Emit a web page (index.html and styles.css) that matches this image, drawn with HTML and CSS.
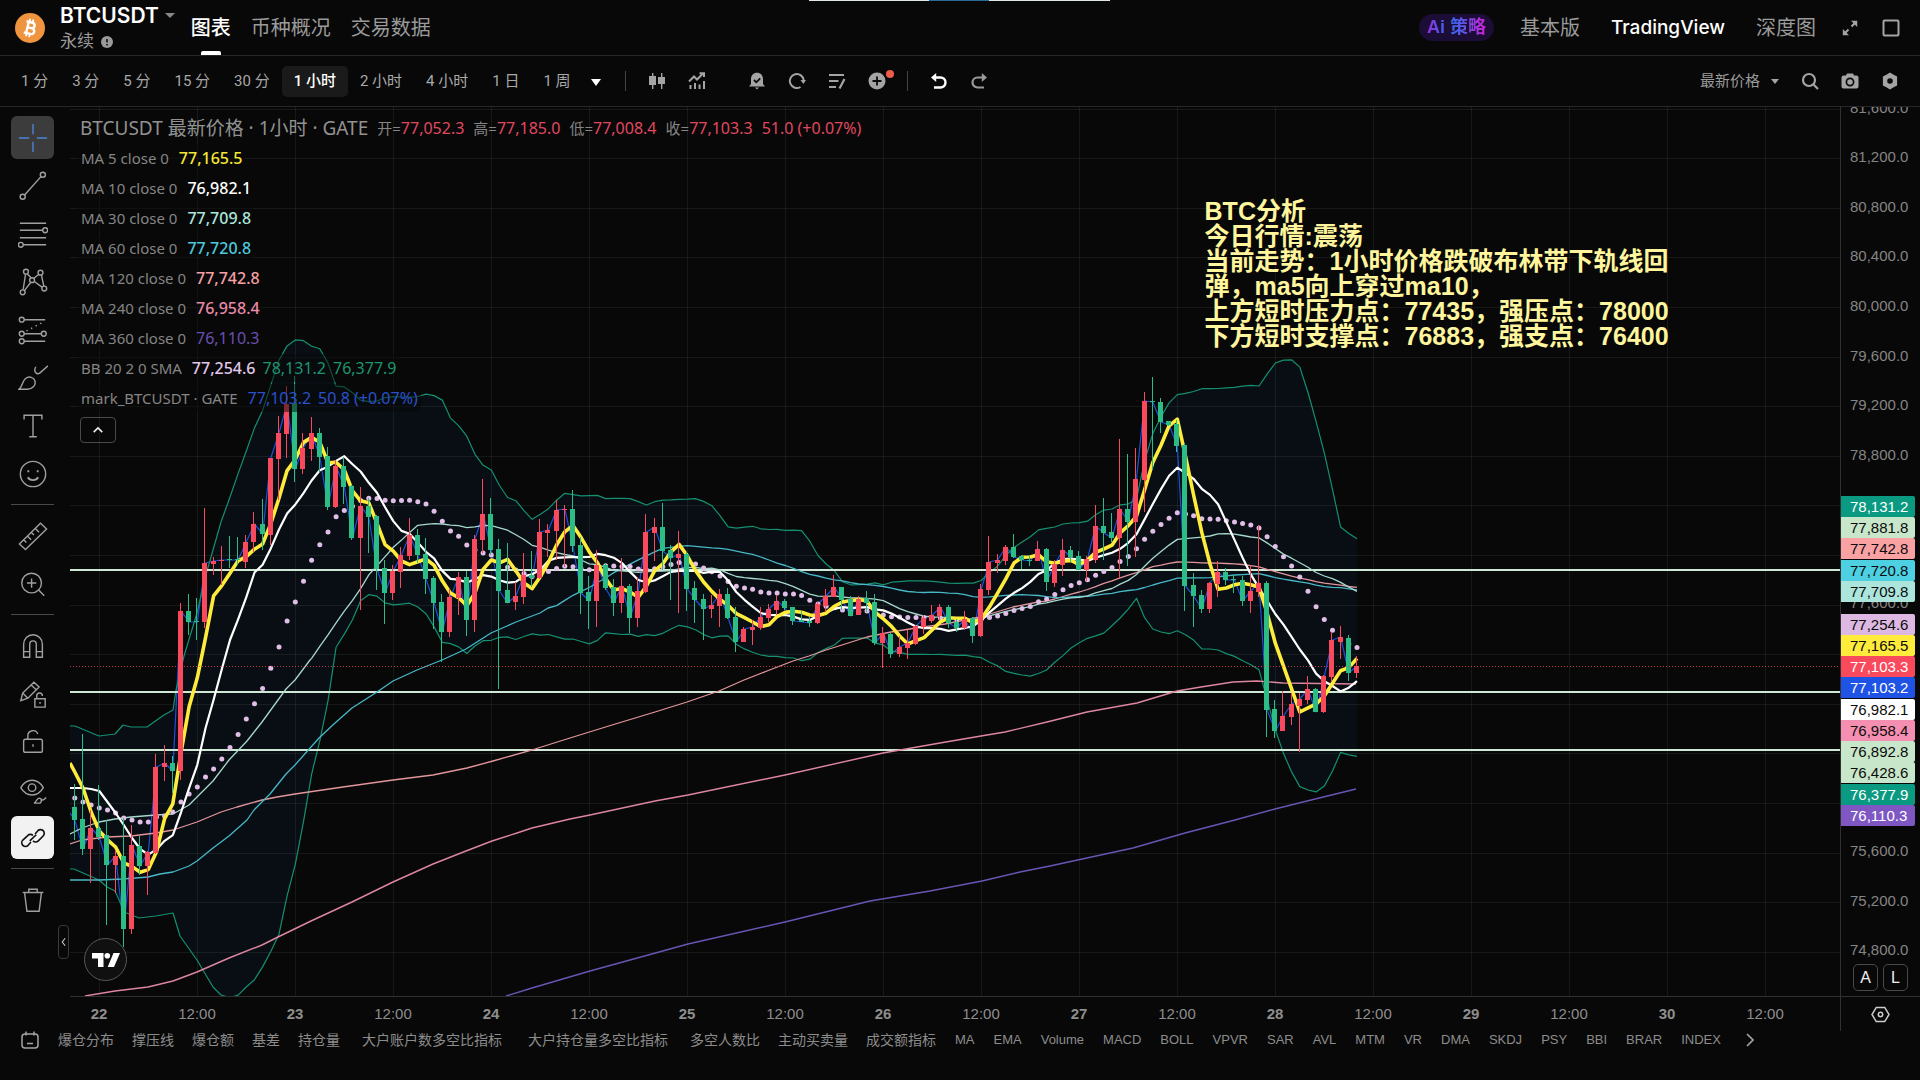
FILE: index.html
```html
<!DOCTYPE html>
<html lang="zh-CN">
<head>
<meta charset="utf-8">
<meta name="viewport" content="width=device-width, initial-scale=1">
<title>BTCUSDT 永续 图表</title>
<link rel="stylesheet" href="styles.css">
</head>
<body>
<div class="top-strip" aria-hidden="true"></div>

<header class="header">
  <svg class="coin" viewBox="0 0 30 30" aria-hidden="true"><circle cx="15" cy="15" r="15" fill="#f0953f"/><g transform="rotate(14 15 15)" fill="none" stroke="#fff" stroke-width="2.4"><path d="M10 9.3h6.2a2.7 2.7 0 0 1 0 5.5h-3.8M12.4 14.8h4.6a2.9 2.9 0 0 1 0 5.9H10M12.4 9.3v11.4"/><path d="M13 6v3M16.3 6v3M13 21v3M16.3 21v3" stroke-width="1.8"/></g></svg>
  <div class="pair">
    <button class="pair-name" type="button">BTCUSDT<span class="caret caret-dim"></span></button>
    <div class="pair-kind">永续<svg viewBox="0 0 12 12" aria-hidden="true"><circle cx="6" cy="6" r="6" fill="#9a9a9a"/><path d="M6 3v3.6M6 8v1.4" stroke="#111" stroke-width="1.6"/></svg></div>
  </div>
  <nav class="tabs">
    <a class="tab tab-on" href="#chart">图表</a>
    <a class="tab" href="#about">币种概况</a>
    <a class="tab" href="#data">交易数据</a>
  </nav>
  <nav class="views">
    <a class="ai-pill" href="#ai"><span class="ai-text">Ai 策略</span></a>
    <a class="view" href="#basic">基本版</a>
    <a class="view view-on" href="#tv">TradingView</a>
    <a class="view" href="#depth">深度图</a>
  </nav>
  <button class="head-btn" type="button" aria-label="展开"><svg viewBox="0 0 18 18" fill="none" stroke="#a4a4a4" stroke-width="2"><path d="M10.500 7.500L15 3M7.500 10.500L3 15"/><path d="M10 1.800h6.200V8zM1.800 10v6.200H8z" fill="#a4a4a4" stroke="none"/></svg></button>
  <button class="head-btn" type="button" aria-label="窗口"><svg viewBox="0 0 18 18"><rect x="1.500" y="1.500" width="15" height="15" rx="1" fill="none" stroke="#a4a4a4" stroke-width="2"/></svg></button>
</header>

<div class="toolbar">
  <div class="periods">
    <button type="button">1 分</button><button type="button">3 分</button><button type="button">5 分</button><button type="button">15 分</button><button type="button">30 分</button><button class="on" type="button">1 小时</button><button type="button">2 小时</button><button type="button">4 小时</button><button type="button">1 日</button><button type="button">1 周</button>
  </div>
  <button class="more" type="button" aria-label="更多周期"><span class="caret caret-big"></span></button>
  <span class="bar"></span>
  <div class="tools tools-a">
    <button type="button" aria-label="蜡烛图"><svg viewBox="0 0 18 18" fill="#a4a4a4"><path d="M1 4h7v9H1zM10 5h7v7h-7z"/><path d="M4 1h1.400v16H4zM13 1h1.400v16H13z"/></svg></button>
    <button type="button" aria-label="指标"><svg viewBox="0 0 18 18" fill="none" stroke="#a4a4a4" stroke-width="2"><path d="M1 9.500L6 4.500l3 3 6.500-6.500M11.500 1.200H16V5M2.500 13v4M7 11v6M11.500 12.500V17M16 9v8"/></svg></button>
  </div>
  <div class="tools tools-b">
    <button type="button" aria-label="提醒"><svg viewBox="0 0 18 18"><path d="M9 .8c3.600 0 6 2.600 6 6.200v5l2 2.500H1L3 12V7C3 3.400 5.400.8 9 .8zM7 15.500h4L9 17.500z" fill="#a4a4a4"/><path d="M6 8l2.300 2.300L12.200 6.300" fill="none" stroke="#0a0a0a" stroke-width="1.800"/></svg></button>
    <button type="button" aria-label="回放"><svg viewBox="0 0 18 18"><path d="M12.500 15A7 7 0 1 1 15.800 8.500" fill="none" stroke="#a4a4a4" stroke-width="2"/><path d="M12.500 8h5.500l-2.600 4z" fill="#a4a4a4"/></svg></button>
    <button type="button" aria-label="对象列表"><svg viewBox="0 0 18 18" fill="none" stroke="#a4a4a4" stroke-width="2.200"><path d="M1 3h15M1 9h9.500M1 15h7M16.500 7l-5 9.500"/></svg></button>
    <button class="dotted" type="button" aria-label="添加"><svg viewBox="0 0 18 18"><circle cx="9" cy="9" r="8.500" fill="#a4a4a4"/><path d="M9 4.500v9M4.500 9h9" stroke="#0a0a0a" stroke-width="1.800"/></svg></button>
  </div>
  <span class="bar"></span>
  <div class="tools tools-c">
    <button type="button" aria-label="撤销"><svg viewBox="0 0 18 18" fill="none" stroke="#fff" stroke-width="2.400"><path d="M3 5.500h7.500a5 5 0 0 1 0 10H4"/><path d="M6.200 1v9L1 5.500z" fill="#fff" stroke="none"/></svg></button>
    <button type="button" aria-label="重做"><svg viewBox="0 0 18 18" fill="none" stroke="#9a9a9a" stroke-width="2.200"><path d="M15 5.500H7.500a5 5 0 0 0 0 10H14"/><path d="M11.800 1v9L17 5.500z" fill="#9a9a9a" stroke="none"/></svg></button>
  </div>
  <button class="price-kind" type="button">最新价格<span class="caret"></span></button>
  <div class="tools tools-d">
    <button type="button" aria-label="搜索"><svg viewBox="0 0 18 18" fill="none" stroke="#a4a4a4" stroke-width="2.200"><circle cx="8" cy="8" r="6"/><path d="M12.500 12.500L17 17"/></svg></button>
    <button type="button" aria-label="截图"><svg viewBox="0 0 18 18"><path d="M2.500 3.500H5l1-2h6l1 2h2.500A2 2 0 0 1 17.500 5.500v9a2 2 0 0 1-2 2h-13a2 2 0 0 1-2-2v-9a2 2 0 0 1 2-2z" fill="#a4a4a4"/><circle cx="9" cy="10" r="3.600" fill="none" stroke="#0a0a0a" stroke-width="1.700"/></svg></button>
    <button type="button" aria-label="设置"><svg viewBox="0 0 18 18"><path d="M9 .5l3.200 1.900 3.900 2v9.200l-3.900 2L9 17.500l-3.200-1.900-3.900-2V4.400l3.900-2z" fill="#a4a4a4"/><circle cx="9" cy="9" r="2.800" fill="#0a0a0a"/></svg></button>
  </div>
</div>

<main class="workspace">
  <aside class="draw">
    <button class="on" type="button" aria-label="十字光标"><svg viewBox="0 0 32 32"><path d="M16 1v11M16 20v11M1 16h11M20 16h11"/></svg></button>
    <button type="button" aria-label="趋势线"><svg viewBox="0 0 32 32"><path d="M7 25.500L24.500 6"/><circle cx="5" cy="27.500" r="2.700"/><circle cx="26.500" cy="4" r="2.700"/></svg></button>
    <button type="button" aria-label="斐波那契"><svg viewBox="0 0 32 32"><path d="M2 4.500h28M2 12h24.500M2 20h28M5.500 27.500H30"/><circle cx="29" cy="12" r="2.600"/><circle cx="3" cy="27.500" r="2.600"/></svg></button>
    <button type="button" aria-label="形态"><svg viewBox="0 0 32 32"><circle cx="8.500" cy="5" r="2.600"/><circle cx="24" cy="6" r="2.600"/><circle cx="15" cy="14" r="2.600"/><circle cx="5" cy="27" r="2.600"/><circle cx="28" cy="23" r="2.600"/><path d="M8 8L5.500 24M10 7.500l4 4M17 12l5-4M25 8.500l2.500 12M13.500 16.500L7 25M17.500 15.500l8 6"/></svg></button>
    <button type="button" aria-label="预测"><svg viewBox="0 0 32 32"><path d="M6.500 5H29M6.500 20H25M6.500 28H29"/><path d="M9 17L28 7" stroke-dasharray="1.500 4"/><circle cx="4" cy="5" r="2.600"/><circle cx="4" cy="20" r="2.600"/><circle cx="4" cy="28" r="2.600"/><circle cx="27.500" cy="20" r="2.600"/></svg></button>
    <button type="button" aria-label="画笔"><svg viewBox="0 0 32 32"><path d="M1 28c4-3 3-8 7-11.500 4-3 9-1 10 2.500 1.500 5-3 9-8 9zM19 4c-3 5 1 9 4.500 6.500L32 3"/></svg></button>
    <button type="button" aria-label="文字"><svg viewBox="0 0 32 32"><path d="M6.500 9V4.500h19V9M16 4.500v23M12 27.500h8"/></svg></button>
    <button type="button" aria-label="表情"><svg viewBox="0 0 32 32"><circle cx="16" cy="16" r="13.500"/><path d="M10.500 19.500c2 4 9 4 11 0M11 12v2M21 12v2" stroke-width="2"/></svg></button>
    <hr>
    <button type="button" aria-label="测量"><svg viewBox="0 0 32 32"><path d="M1.500 24.500L24 2.500l6.500 6L8 30.500zM6 20l3 3M10 16l4 4M14 12l3 3M18.500 8l4 4"/></svg></button>
    <button type="button" aria-label="放大"><svg viewBox="0 0 32 32"><circle cx="14.500" cy="15" r="10.500"/><path d="M22 22.500l6 6M9.500 15h10M14.500 10v10"/></svg></button>
    <hr>
    <button type="button" aria-label="磁铁"><svg viewBox="0 0 32 32"><path d="M6 28V14a10 10 0 0 1 20 0v14h-6.500V14a3.500 3.500 0 0 0-7 0v14zM6 22h6.500M19.500 22H26"/></svg></button>
    <button type="button" aria-label="保持绘图"><svg viewBox="0 0 32 32"><path d="M3 23l2-8L17 3.500l5.500 5L10.500 20.500zM14 6.500l5.500 5M5 15l5.500 5.500M18 21h11v9H18zM20 21v-3a3 3 0 0 1 6 0M23.500 24.500v2"/></svg></button>
    <button type="button" aria-label="锁定"><svg viewBox="0 0 32 32"><rect x="6" y="13" width="20" height="14" rx="2"/><path d="M10.500 13V9.500c0-6.500 9-7.500 10.500-2M16 18.500v2.500"/></svg></button>
    <button type="button" aria-label="隐藏"><svg viewBox="0 0 32 32"><path d="M3 13.500C9 3 21 3 27 13.500 21 24 9 24 3 13.500zM17 30c3-1 2-4 5-5s4 3 1.500 5zM25 25c0 2.500 2 2.500 5-1"/><circle cx="15" cy="13.500" r="4"/></svg></button>
    <button class="link" type="button" aria-label="同步"><svg viewBox="0 0 32 32"><path d="M13.500 21l-3.500 4a4.500 4.500 0 0 1-6.500-6.500L9.500 13a4.500 4.500 0 0 1 6.500 0M18.500 11L22 7a4.500 4.500 0 0 1 6.500 6.500L22.500 19.500a4.500 4.500 0 0 1-6.500 0M12 19.500l8-7.500"/></svg></button>
    <hr>
    <button type="button" aria-label="删除"><svg viewBox="0 0 32 32"><path d="M5 8h22M11.500 8V4.500h9V8M7 8l2.500 20h13L25 8"/></svg></button>
  </aside>

  <section class="pane" id="chart">
    <svg class="plot" id="plot" viewBox="70 107 1770 889" preserveAspectRatio="none" role="img" aria-label="BTCUSDT 1小时 K线图"></svg>
    <div class="legend">
      <div class="legend-title"><span class="symbol">BTCUSDT 最新价格 · 1小时 · GATE</span><span>开=<b>77,052.3</b></span><span>高=<b>77,185.0</b></span><span>低=<b>77,008.4</b></span><span>收=<b>77,103.3</b></span><b>51.0 (+0.07%)</b></div>
      <div class="row">MA 5 close 0<b class="c-yellow">77,165.5</b></div>
      <div class="row">MA 10 close 0<b class="c-white">76,982.1</b></div>
      <div class="row">MA 30 close 0<b class="c-mint">77,709.8</b></div>
      <div class="row">MA 60 close 0<b class="c-cyan">77,720.8</b></div>
      <div class="row">MA 120 close 0<b class="c-salmon">77,742.8</b></div>
      <div class="row">MA 240 close 0<b class="c-pink">76,958.4</b></div>
      <div class="row">MA 360 close 0<b class="c-purple">76,110.3</b></div>
      <div class="row">BB 20 2 0 SMA<b class="c-lilac">77,254.6</b><b class="c-green">78,131.2</b><b class="c-green">76,377.9</b></div>
      <div class="row">mark_BTCUSDT · GATE<b class="c-blue">77,103.2</b><b class="c-blue">50.8 (+0.07%)</b></div>
      <button class="fold" type="button" aria-label="收起"><svg viewBox="0 0 14 8"><path d="M2 6.500l5-5 5 5" fill="none" stroke="#eee" stroke-width="1.800"/></svg></button>
    </div>
    <p class="note">BTC分析<br>今日行情:震荡<br>当前走势：1小时价格跌破布林带下轨线回<br>弹，ma5向上穿过ma10，<br>上方短时压力点：77435，强压点：78000<br>下方短时支撑点：76883，强支点：76400</p>
    <a class="tv" href="#tv" aria-label="TradingView"><svg viewBox="0 0 28 14" fill="#fff"><path d="M0 0h11.500v14H6V5.500H0zM21.500 0H28l-6 14h-6.300z"/><circle cx="15.300" cy="2.800" r="2.800"/></svg></a>
    <button class="handle" type="button" aria-label="收起工具栏"><svg viewBox="0 0 6 12"><path d="M5 1.500L1.500 6 5 10.500" fill="none" stroke="#ccc" stroke-width="1.300"/></svg></button>
  </section>

  <div class="prices">
    <ul class="scale">
      <li>81,600.0</li><li>81,200.0</li><li>80,800.0</li><li>80,400.0</li><li>80,000.0</li><li>79,600.0</li><li>79,200.0</li><li>78,800.0</li><li></li><li></li><li>77,600.0</li><li></li><li></li><li></li><li></li><li>75,600.0</li><li>75,200.0</li><li>74,800.0</li>
    </ul>
    <ul class="tags">
      <li class="t-green">78,131.2</li><li class="t-line">77,881.8</li><li class="t-salmon">77,742.8</li><li class="t-cyan seam">77,720.8</li><li class="t-mint">77,709.8</li>
      <li class="t-lilac tag-gap">77,254.6</li><li class="t-yellow">77,165.5</li><li class="t-red">77,103.3</li><li class="t-blue">77,103.2</li><li class="t-white seam">76,982.1</li><li class="t-pink">76,958.4</li><li class="t-line">76,892.8</li><li class="t-line">76,428.6</li><li class="t-green seam">76,377.9</li><li class="t-purple">76,110.3</li>
    </ul>
    <div class="modes"><button type="button">A</button><button type="button">L</button></div>
  </div>

  <div class="times">
    <ol>
      <li class="day">22</li><li>12:00</li><li class="day">23</li><li>12:00</li><li class="day">24</li><li>12:00</li><li class="day">25</li><li>12:00</li><li class="day">26</li><li>12:00</li><li class="day">27</li><li>12:00</li><li class="day">28</li><li>12:00</li><li class="day">29</li><li>12:00</li><li class="day">30</li><li>12:00</li>
    </ol>
  </div>
  <button class="corner" type="button" aria-label="坐标设置"><svg viewBox="0 0 20 18" fill="none" stroke="#ccc" stroke-width="1.600"><path d="M5.500 1.500h9L19 9l-4.500 7.500h-9L1 9z"/><circle cx="10" cy="9" r="2.300"/></svg></button>
</main>

<footer class="indicators">
  <button class="cal" type="button" aria-label="指标列表"><svg viewBox="0 0 18 18" fill="none" stroke="#a4a4a4" stroke-width="1.500"><rect x="1" y="3" width="16" height="14" rx="3"/><path d="M5 .5v4M13 .5v4M6 12.500h6"/></svg></button>
  <div class="group">
    <button type="button">爆仓分布</button><button type="button">撑压线</button><button type="button">爆仓额</button><button type="button">基差</button><button type="button">持仓量</button><button class="wide" type="button">大户账户数多空比指标</button><button class="wide" type="button">大户持仓量多空比指标</button><button type="button">多空人数比</button><button type="button">主动买卖量</button><button type="button">成交额指标</button>
  </div>
  <div class="group group-latin">
    <button type="button">MA</button><button type="button">EMA</button><button type="button">Volume</button><button type="button">MACD</button><button type="button">BOLL</button><button type="button">VPVR</button><button type="button">SAR</button><button type="button">AVL</button><button type="button">MTM</button><button type="button">VR</button><button type="button">DMA</button><button type="button">SKDJ</button><button type="button">PSY</button><button type="button">BBI</button><button type="button">BRAR</button><button type="button">INDEX</button>
  </div>
  <button class="next" type="button" aria-label="更多"><svg viewBox="0 0 8 14"><path d="M1 1l6 6-6 6" fill="none" stroke="#a4a4a4" stroke-width="1.600"/></svg></button>
</footer>
<script src="chart.js"></script>
</body>
</html>
```
FILE: styles.css
```css
* { box-sizing: border-box; margin: 0; padding: 0; }

body {
  display: flex;
  flex-direction: column;
  min-height: 100vh;
  background: #080808;
  color: #9a9a9a;
  font-family: "Liberation Sans", "Noto Sans CJK SC", sans-serif;
  font-size: 15px;
  line-height: 20px;
  overflow-x: hidden;
}

button { background: none; border: 0; color: inherit; font: inherit; white-space: nowrap; cursor: pointer; }
a { color: inherit; text-decoration: none; white-space: nowrap; }
ul, ol { list-style: none; }
svg { display: block; }

.top-strip {
  position: absolute;
  top: 0;
  left: 809px;
  width: 301px;
  height: 1px;
  background: linear-gradient(90deg, #dfe8e4 120px, #2a6a96 120px, #2a6a96 180px, #dfe8e4 180px);
}

.caret {
  display: inline-block;
  border: 4px solid transparent;
  border-top: 5px solid #a4a4a4;
  border-bottom: 0;
}
.caret-dim { border-width: 5px 5px 0; border-top-color: #888; }
.caret-big { border-width: 7px 5px 0; border-top-color: #fff; }

/* Header */
.header {
  display: flex;
  align-items: center;
  height: 56px;
  padding: 0 20px 0 15px;
  border-bottom: 1px solid #262626;
}
.coin { width: 30px; height: 30px; margin-right: 15px; }
.pair { margin-right: 16px; }
.pair-name {
  display: flex;
  align-items: center;
  gap: 6px;
  color: #fff;
  font-family: Inter, "Liberation Sans", sans-serif;
  font-size: 21px;
  font-weight: 600;
  line-height: 28px;
}
.pair-kind { display: flex; align-items: center; gap: 7px; font-size: 17px; line-height: 24px; }
.pair-kind svg { width: 12px; height: 12px; }
.tabs { display: flex; gap: 20px; height: 55px; }
.tab { position: relative; font-size: 20px; line-height: 57px; }
.tab-on { color: #fff; font-weight: 500; }
.tab-on::after {
  content: "";
  position: absolute;
  left: 50%;
  bottom: 0;
  width: 20px;
  height: 4px;
  margin-left: -10px;
  border-radius: 2px 2px 0 0;
  background: #fff;
}
.views { display: flex; align-items: center; gap: 31px; margin-left: auto; margin-right: 25px; font-size: 20px; }
.view-on { color: #fff; font-family: Inter, sans-serif; font-size: 19px; font-weight: 500; }
.ai-pill {
  height: 27px;
  margin-right: -5px;
  padding: 0 8px;
  border-radius: 14px;
  background: #1b0d35;
  font-size: 18px;
  line-height: 27px;
}
.ai-text {
  background: linear-gradient(90deg, #9a2be0, #2f6af0 35%, #5a58ea 60%, #d41fd6);
  -webkit-background-clip: text;
  background-clip: text;
  color: transparent;
  font-weight: 700;
}
.head-btn + .head-btn { margin-left: 23px; }
.head-btn svg { width: 18px; height: 18px; }

/* Period and tool bar */
.toolbar {
  display: flex;
  align-items: center;
  height: 51px;
  padding: 0 21px 0 9px;
  border-bottom: 1px solid #262626;
}
.periods { display: flex; font-family: Roboto, "Noto Sans CJK SC", sans-serif; color: #a8a8a8; }
.periods button { height: 31px; padding: 0 12px; border-radius: 5px; }
.periods .on { background: #1a1a1a; color: #fff; font-weight: 500; }
.more { margin: 0 24px 0 8px; line-height: 10px; }
.bar { width: 1px; height: 20px; background: #444; }
.tools { display: flex; align-items: center; }
.tools svg { width: 18px; height: 18px; }
.tools-a { gap: 22px; margin: 0 42px 0 22px; }
.tools-b { gap: 22px; margin-right: 21px; }
.tools-c { gap: 22px; margin-left: 22px; }
.tools-d { gap: 22px; margin-left: 22px; }
.dotted { position: relative; }
.dotted::after {
  content: "";
  position: absolute;
  top: -2px;
  right: -8px;
  width: 8px;
  height: 8px;
  border-radius: 50%;
  background: #ee5b4a;
}
.price-kind { display: flex; align-items: center; gap: 11px; margin-left: auto; }

/* Workspace */
.workspace {
  display: grid;
  grid-template-columns: 70px minmax(0, 1fr) 80px;
  grid-template-rows: minmax(0, 1fr) 34px;
  flex: 1;
  min-height: 860px;
}

.draw {
  grid-row: 1 / 3;
  display: flex;
  flex-direction: column;
  gap: 5px;
  width: 65px;
  padding: 9px 11px 0;
}
.draw button { display: grid; place-items: center; height: 43px; border-radius: 6px; }
.draw button.on { background: #3c3c3c; }
.draw button.link { background: #f2f2f2; }
.draw svg { width: 30px; height: 30px; fill: none; stroke: #a0a0a0; stroke-width: 1.5; }
.draw .on svg { stroke: #4a84d6; }
.draw .link svg { width: 26px; height: 26px; stroke: #111; stroke-width: 2; }
.draw hr { height: 1px; margin: 4px 0; border: 0; background: #4a4a4a; }

.pane { position: relative; border-bottom: 1px solid #303030; }
.plot { position: absolute; inset: 0; width: 100%; height: 100%; overflow: hidden; }

.legend {
  position: relative;
  display: flex;
  flex-direction: column;
  align-items: flex-start;
  padding: 6px 0 0 8px;
  color: #858585;
  font-family: "Noto Sans", "Noto Sans CJK SC", sans-serif;
}
.legend b { font-weight: 400; font-size: 16px; }
.legend-title { display: flex; align-items: center; gap: 9px; height: 30px; padding: 0 2px; }
.legend-title b { color: #e04860; }
.symbol { color: #929292; font-size: 19px; }
.row { display: flex; align-items: center; gap: 7px; height: 28px; margin: 1px 0; padding: 0 3px; background: rgba(8, 8, 8, .5); }
.row b:first-child { margin-left: 3px; }
.row .c-yellow { color: #f5e636; font-weight: 500; }
.row .c-white { color: #fff; font-weight: 500; }
.row .c-mint { color: #ace5dc; font-weight: 500; }
.row .c-cyan { color: #4dc8dc; font-weight: 500; }
.row .c-salmon { color: #f4a0a4; font-weight: 500; }
.row .c-pink { color: #e88aa8; font-weight: 500; }
.row .c-lilac { color: #e1c8e8; font-weight: 500; }
.c-purple { color: #6a4fb0; }
.c-green { color: #1d9470; }
.c-blue { color: #2a50cc; }
.fold { display: grid; place-items: center; width: 36px; height: 26px; margin-top: 4px; margin-left: 2px; border: 1px solid #4a4a4a; border-radius: 4px; }
.fold svg { width: 12px; height: 8px; }

.note {
  position: absolute;
  top: 92px;
  left: 64.1%;
  color: #fff59d;
  font-size: 25px;
  font-weight: 700;
  line-height: 25px;
  white-space: nowrap;
}
.tv {
  position: absolute;
  left: 14px;
  bottom: 15px;
  display: grid;
  place-items: center;
  width: 43px;
  height: 43px;
  border: 1px solid #585858;
  border-radius: 50%;
  background: #101010;
}
.tv svg { width: 28px; height: 14px; }
.handle {
  position: absolute;
  left: -12px;
  bottom: 37px;
  display: grid;
  place-items: center;
  width: 11px;
  height: 34px;
  border: 1px solid #3a3a3a;
  border-radius: 4px;
}
.handle svg { width: 5px; height: 10px; }

/* Price axis */
.prices { position: relative; overflow: hidden; border-left: 1px solid #303030; border-bottom: 1px solid #303030; color: #858585; }
.scale { display: grid; grid-auto-rows: minmax(0, 1fr); height: calc(100% + 3px); margin-top: -24px; padding-left: 9px; }
.scale li { display: flex; align-items: center; }
.tags { position: absolute; top: 389px; left: 0; width: 74px; }
.tags li { height: 21px; padding-left: 9px; border-radius: 0 2px 2px 0; color: #0c0c0c; line-height: 21px; }
.tags .seam { margin-top: 1px; }
.tags .tag-gap { margin-top: 12px; }
.tags .t-green { background: #0a9981; color: #fff; }
.tags .t-line { background: #c8e6c9; }
.tags .t-salmon { background: #faa1a4; }
.tags .t-cyan { background: #4dd0e1; }
.tags .t-mint { background: #ace5dc; }
.tags .t-lilac { background: #dcb8e2; }
.tags .t-yellow { background: #ffeb3b; }
.tags .t-red { background: #f9495d; color: #fff; }
.tags .t-blue { background: #1e53e5; color: #fff; }
.tags .t-white { background: #fff; }
.tags .t-pink { background: #f48fb1; }
.tags .t-purple { background: #7e57c2; color: #fff; }
.modes { position: absolute; right: 12px; bottom: 5px; display: flex; gap: 5px; }
.modes button { width: 25px; height: 27px; border: 1px solid #4a4a4a; border-radius: 5px; background: #080808; color: #f0f0f0; font-size: 16px; }

/* Time axis */
.times { overflow: hidden; color: #8e8e8e; }
.times ol { display: grid; grid-template-columns: repeat(18, minmax(0, 1fr)); margin: 0 26px 0 -20px; text-align: center; line-height: 34px; }
.day { font-weight: 700; }
.corner { display: grid; place-items: center; border-left: 1px solid #303030; }
.corner svg { width: 19px; height: 17px; }

/* Indicator bar */
.indicators {
  display: flex;
  align-items: center;
  gap: 19px;
  height: 49px;
  padding: 0 21px 31px;
  color: #8c8c8c;
  line-height: 18px;
  overflow: hidden;
}
.group { display: flex; gap: 18px; font-size: 14px; }
.group-latin { gap: 19px; font-size: 13px; }
.group .wide { margin: 0 4px; }
.indicators svg { height: 18px; }
.cal svg { width: 18px; }
.next { margin-left: 6px; }
.indicators .next svg { width: 8px; height: 14px; }
```
FILE: chart.js
```js
const FIRST = -3;
const STEP = 98 / 12;
const X0 = 99.3;
const BOTTOM = 996;

// One entry per hour: direction, high, body top, body bottom, low (chart units, y downwards).
const candles = `g784,807,820,840 g734,819,849,855 r810,828,849,883 g785,828,837,840 g820,835,865,925 r850,856,865,893
g818,856,929,947 r825,845,929,934 g836,846,866,875 r851,852,866,895 r754,767,853,854 r745,763,767,781 g756,763,771,793
r603,611,771,780 g594,611,622,635 g598,621,622,640 r508,563,622,628 r557,561,564,575 r546,560,561,585 g536,559,560,568
g537,559,560,565 r535,542,562,568 r512,524,542,552 g499,524,534,550 r458,458,535,545 r416,433,459,500 r386,404,434,458
g376,403,469,482 r433,448,469,474 r417,433,449,461 g428,433,457,472 g447,456,507,510 r460,466,507,508 g457,466,487,504
g485,486,538,540 r487,506,538,610 g498,506,517,553 g515,516,569,590 g560,568,593,624 r565,571,593,600 r547,555,572,588
r518,535,556,560 g529,535,555,563 g538,554,579,594 g576,578,603,629 g594,602,632,662 r589,597,632,637 r572,577,598,615
g571,577,620,636 r535,539,620,632 r479,514,540,553 g498,514,550,555 g539,549,591,689 g543,590,603,603 r582,596,602,610
r553,575,597,604 g551,575,578,587 r519,532,578,579 r524,530,533,557 r500,510,531,560 r505,509,510,567 g490,509,546,552
g537,545,593,614 g576,592,601,629 r550,565,601,627 g563,565,588,590 g579,587,603,616 r558,586,603,613 g584,586,618,633
r577,591,618,627 r514,532,592,593 r518,527,533,561 g503,527,551,570 g545,550,558,600 r531,554,558,613 g552,554,589,611
g581,588,600,623 g594,599,609,640 r595,605,609,618 r589,594,606,627 g588,594,618,619 g607,617,642,652 r627,629,642,642
r620,627,630,645 r607,617,628,630 r604,609,618,622 r595,601,610,615 g599,601,608,610 g607,607,621,625 g611,620,622,622
g617,621,623,627 r602,604,623,624 r589,596,606,612 r575,587,597,597 g587,587,600,610 g596,599,616,616 r596,599,615,615
g591,598,603,612 g594,602,643,645 r627,633,643,668 g633,634,654,658 r636,647,654,657 r630,643,648,659 r625,626,644,645
r615,618,627,634 r605,615,621,623 r604,607,616,620 g605,607,623,628 g619,622,628,632 r611,619,628,630 g617,618,636,643
r584,589,636,637 r536,562,590,595 r554,560,563,573 r545,547,561,565 g534,547,557,558 g555,556,560,569 g555,560,561,566
r541,549,561,561 g548,549,582,591 r560,564,583,587 r539,550,565,576 g546,550,557,562 g551,556,570,570 r556,559,570,581
r505,526,560,563 g498,526,533,560 g513,532,538,542 r439,509,538,578 g454,509,522,566 r448,479,522,557 r392,401,480,512
g377,401,402,470 g398,402,422,433 g421,421,425,426 g420,424,446,452 g443,445,586,611 g573,585,596,627 g590,595,609,613
r582,583,609,613 r561,572,584,597 g568,572,580,585 g575,579,580,593 g576,580,601,606 r565,591,601,613 r525,583,592,597
g581,583,710,737 g700,709,731,738 r691,716,731,731 r693,704,717,725 r693,699,706,752 r676,689,700,704 g688,689,712,712
r675,676,712,713 r632,640,677,682 r626,637,642,659 g635,638,673,681 r656,666,673,678`
  .split(/\s+/)
  .map((s) => [s[0], ...s.slice(1).split(",").map(Number)]);

const LAST = FIRST + candles.length - 1;
const xOf = (i) => X0 + STEP * i;
const closes = candles.map(([dir, , top, bottom]) => (dir === "r" ? top : bottom));

function windowOf(i, n) {
  const end = i - FIRST + 1;
  return closes.slice(end - n, end);
}
const mean = (list) => list.reduce((a, b) => a + b, 0) / list.length;

// Candles before the visible range are unknown, so each average starts from known points.
function average(head, n) {
  const points = [...head];
  for (let i = FIRST + n - 1; i <= LAST; i++) points.push([xOf(i), mean(windowOf(i, n))]);
  return points;
}
function band(head, sign) {
  const points = [...head];
  for (let i = FIRST + 19; i <= LAST; i++) {
    const w = windowOf(i, 20);
    const m = mean(w);
    const sd = Math.sqrt(mean(w.map((v) => (v - m) ** 2)));
    points.push([xOf(i), m + sign * 2 * sd]);
  }
  return points;
}
const hourly = (from, ys) => ys.map((y, k) => [xOf(from + k), y]);

const ma5 = average([[70, 763], ...hourly(-3, [772, 788, 812, 831])], 5);
const ma10 = average([[70, 788], ...hourly(-3, [788, 788, 789, 791, 802, 813, 825, 838, 849])], 10);
const mid = average(hourly(-3, [798, 802, 805, 808, 810, 813, 818, 820, 822, 822, 817, 816, 812, 802, 794, 787, 777, 769, 759]), 20);
const ma30 = average([[70, 834], [82, 828], [99, 822], [115, 819], [131, 817], [156, 815], [173, 814], [189, 805],
  [197, 797], [213, 781], [229, 760], [247, 741], [262, 722], [270, 711], [286, 689], [295, 680], [310, 660]], 30);
const ma60 = average([[70, 880], [99, 880], [123, 879], [148, 877], [160, 874], [173, 872], [189, 866], [197, 861],
  [213, 848], [229, 836], [247, 820], [254, 810], [270, 794], [286, 774], [295, 765], [319, 738], [335, 723],
  [352, 708], [377, 692], [393, 681], [417, 670], [442, 660], [466, 649], [491, 633], [507, 626], [516, 622], [540, 613], [548, 608]], 60);
const ma120 = average([[70, 844], [82, 840], [107, 837], [131, 836], [156, 833], [173, 830], [197, 822], [221, 812],
  [237, 807], [262, 800], [277, 797], [295, 794], [343, 787], [393, 780], [433, 775], [467, 768], [493, 761],
  [535, 749], [570, 738], [612, 725], [655, 712], [687, 702], [719, 691], [744, 680], [767, 671], [793, 661],
  [809, 656], [826, 650], [842, 645], [867, 637], [891, 632], [916, 628], [945, 624], [980, 617], [1013, 607], [1038, 602]], 120);
const ma240 = [[85, 996], [115, 991], [148, 987], [173, 981], [197, 972], [229, 958], [262, 945], [278, 937],
  [311, 921], [352, 902], [393, 882], [433, 864], [466, 851], [492, 841], [517, 833], [532, 828], [570, 819],
  [590, 815], [655, 801], [688, 795], [785, 775], [883, 753], [940, 743], [981, 736], [1005, 732], [1047, 722],
  [1087, 712], [1137, 703], [1177, 691], [1201, 687], [1233, 682], [1257, 681], [1283, 683], [1356, 684]];
const ma360 = [[506, 996], [532, 988], [590, 971], [670, 949], [688, 944], [785, 922], [870, 901], [930, 891],
  [982, 881], [1020, 872], [1050, 866], [1133, 848], [1185, 833], [1235, 820], [1275, 809], [1307, 801], [1356, 789]];
const upper = band([[70, 726], [75, 726], [99, 736], [115, 734], [123, 725], [131, 727], [147, 727], [164, 715],
  [173, 710], [176, 690], [184, 656], [197, 613], [205, 578], [213, 550], [221, 522]], -1);
const lower = band([[70, 869], [74, 869], [99, 880], [107, 887], [115, 891], [120, 902], [124, 912], [139, 918],
  [156, 916], [173, 913], [180, 936], [197, 960], [213, 987], [221, 995]], 1);
const mark = [[70, 813], ...closes.map((y, k) => [xOf(FIRST + k), y])];

const path = (points) => "M" + points.map(([x, y]) => x.toFixed(1) + " " + y.toFixed(1)).join("L");
const line = (points, color, width) =>
  `<path d="${path(points)}" fill="none" stroke="${color}" stroke-width="${width}" stroke-linejoin="round"/>`;

const out = [];
out.push(`<path d="${path([...upper, ...lower.slice().reverse()])}Z" fill="#1480e8" fill-opacity=".05"/>`);
for (let k = 0; k < 18; k++) {
  const y = Math.floor(109 + 49.6 * k) + 0.5;
  const x = Math.floor(99 + 98 * k) + 0.5;
  out.push(`<path d="M70 ${y}H1840M${x} 107V${BOTTOM}" stroke="#e0fff4" stroke-opacity=".07"/>`);
}
out.push(line(mark, "#1f4fd8", 1.2));
out.push(line(upper, "#159070", 1.2), line(lower, "#159070", 1.2));
for (const y of [570, 692, 750]) out.push(`<path d="M70 ${y}H1840" stroke="#cfe8d6" stroke-width="2"/>`);
out.push(line(ma360, "#6a55b4", 1.4), line(ma240, "#dd869f", 1.4), line(ma120, "#e2969c", 1.3));
out.push(line(ma60, "#48b8c8", 1.3), line(ma30, "#a6d8ce", 1.3));
for (const [x, y] of mid) out.push(`<circle cx="${x.toFixed(1)}" cy="${y.toFixed(1)}" r="2.5" fill="#e1bee7"/>`);
out.push(line(ma10, "#fff", 2.2), line(ma5, "#ffeb3b", 3.6));
candles.forEach(([dir, high, top, bottom, low], k) => {
  const x = Math.round(xOf(FIRST + k));
  const color = dir === "r" ? "#f9495d" : "#2bbd85";
  out.push(`<path d="M${x - 0.5} ${high}V${low}" stroke="${color}"/>`);
  out.push(`<rect x="${x - 3}" y="${top}" width="5" height="${Math.max(1, bottom - top)}" fill="${color}"/>`);
});
out.push(`<path d="M70 666.500H1840" stroke="#f9495d" stroke-opacity=".75" stroke-dasharray="1 2"/>`);
document.getElementById("plot").innerHTML = out.join("");
```
